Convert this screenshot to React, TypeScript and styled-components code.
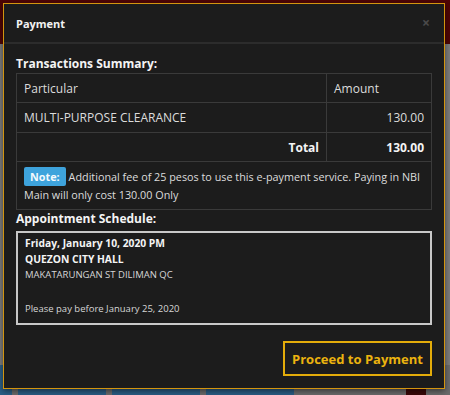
import React from "react";
import styled, { createGlobalStyle } from "styled-components";

const Global = createGlobalStyle`
  html, body { margin: 0; padding: 0; }
  body { width: 450px; height: 395px; overflow: hidden; background: #7a7a7a; font-family: "Open Sans", "Noto Sans", sans-serif; }
`;

const Page = styled.div`
  position: relative;
  width: 450px;
  height: 395px;
  display: flex;
  flex-direction: column;
  overflow: hidden;
`;

const TopBand = styled.div`
  height: 44px;
  background: #4e0505;
`;

const MiddleBand = styled.div`
  flex: 1;
  background: #7c7c7c;
`;

const BottomBand = styled.div`
  height: 30px;
  display: flex;
  gap: 6px;
  background: #6b6b6b;
`;

const Tab = styled.div<{ $w: number; $c: string }>`
  width: ${(p) => p.$w}px;
  background: ${(p) => p.$c};
`;

const Modal = styled.div`
  position: absolute;
  left: 3px;
  top: 3px;
  width: 442px;
  height: 386px;
  box-sizing: border-box;
  background: #1c1c1c;
  border: 1px solid #d3950f;
  display: flex;
  flex-direction: column;
  box-shadow: 0 2px 6px rgba(0, 0, 0, 0.5);
`;

const Header = styled.div`
  flex-shrink: 0;
  height: 40px;
  box-sizing: border-box;
  border-bottom: 2px solid #2c2c2c;
  display: flex;
  align-items: center;
  justify-content: space-between;
  padding: 0 14px 0 12px;
`;

const Title = styled.div`
  color: #f2f2f2;
  font-weight: 700;
  font-size: 11px;
`;

const Close = styled.div`
  color: #4a4a4a;
  font-size: 14px;
  font-weight: 700;
  line-height: 1;
`;

const Body = styled.div`
  flex-shrink: 0;
  padding: 11px 12px 0;
  display: flex;
  flex-direction: column;
`;

const Heading = styled.div`
  color: #f4f4f4;
  font-weight: 700;
  font-size: 12px;
  line-height: 18px;
`;

const Table = styled.table`
  width: 416px;
  border-collapse: collapse;
  color: #dcdcdc;
  font-size: 12px;
`;

const Cell = styled.td<{ $right?: boolean; $bold?: boolean; $w?: number; $h?: number }>`
  border: 1px solid #3a3a3a;
  height: ${(p) => p.$h ?? 29}px;
  padding: 0 7px;
  text-align: ${(p) => (p.$right ? "right" : "left")};
  font-weight: ${(p) => (p.$bold ? 700 : 400)};
  color: ${(p) => (p.$bold ? "#f4f4f4" : "#dcdcdc")};
  ${(p) => (p.$w ? `width: ${p.$w}px;` : "")}
  box-sizing: border-box;
`;

const NoteCell = styled.td`
  border: 1px solid #3a3a3a;
  padding: 6px 6px 5px 7px;
  line-height: 18px;
  font-size: 10.8px;
  color: #dcdcdc;
`;

const Badge = styled.span`
  display: inline;
  background: #3ea3dc;
  color: #f4f9fc;
  font-weight: 700;
  font-size: 10.8px;
  line-height: 18px;
  padding: 2px 6px;
  border-radius: 2px;
  margin-right: 3px;
`;

const Schedule = styled.div`
  margin-top: 3px;
  width: 416px;
  box-sizing: border-box;
  border: 2px solid #c8c8c8;
  padding: 3px 7px 7px;
  color: #d6d6d6;
  font-size: 9.5px;
  line-height: 15px;
`;

const Strong = styled.div`
  color: #f4f4f4;
  font-weight: 700;
  font-size: 10.3px;
  line-height: 15.5px;
`;

const Line = styled.div<{ $gap?: number }>`
  margin-top: ${(p) => p.$gap ?? 0}px;
`;

const Footer = styled.div`
  flex-shrink: 0;
  margin-top: auto;
  display: flex;
  justify-content: flex-end;
  padding: 0 12px 12px;
`;

const Button = styled.button`
  width: 149px;
  height: 35px;
  box-sizing: border-box;
  background: #1c1c1c;
  border: 2px solid #e3ac0a;
  color: #ebb30f;
  font-family: "Open Sans", "Noto Sans", sans-serif;
  font-weight: 700;
  font-size: 13px;
  padding: 0;
  cursor: pointer;
`;

export default function App() {
  return (
    <>
      <Global />
      <Page>
        <TopBand />
        <MiddleBand />
        <BottomBand>
          <Tab $w={12} $c="#2b5f86" />
          <Tab $w={88} $c="#2a5d84" />
          <Tab $w={88} $c="#2a5d84" />
          <Tab $w={88} $c="#2a5d84" />
          <Tab $w={100} $c="#6b6b6b" />
          <Tab $w={20} $c="#3a0808" />
        </BottomBand>
        <Modal>
          <Header>
            <Title>Payment</Title>
            <Close>×</Close>
          </Header>
          <Body>
            <Heading>Transactions Summary:</Heading>
            <Table>
              <tbody>
                <tr>
                  <Cell>Particular</Cell>
                  <Cell $w={105}>Amount</Cell>
                </tr>
                <tr>
                  <Cell $h={30}>MULTI-PURPOSE CLEARANCE</Cell>
                  <Cell $h={30} $right>130.00</Cell>
                </tr>
                <tr>
                  <Cell $right $bold>Total</Cell>
                  <Cell $right $bold>130.00</Cell>
                </tr>
                <tr>
                  <NoteCell colSpan={2}>
                    <Badge>Note:</Badge>Additional fee of 25 pesos to use this e-payment service. Paying in NBI Main will only cost 130.00 Only
                  </NoteCell>
                </tr>
              </tbody>
            </Table>
            <Heading>Appointment Schedule:</Heading>
            <Schedule>
              <Strong>Friday, January 10, 2020 PM</Strong>
              <Strong>QUEZON CITY HALL</Strong>
              <Line>MAKATARUNGAN ST DILIMAN QC</Line>
              <Line $gap={19}>Please pay before January 25, 2020</Line>
            </Schedule>
          </Body>
          <Footer>
            <Button>Proceed to Payment</Button>
          </Footer>
        </Modal>
      </Page>
    </>
  );
}
